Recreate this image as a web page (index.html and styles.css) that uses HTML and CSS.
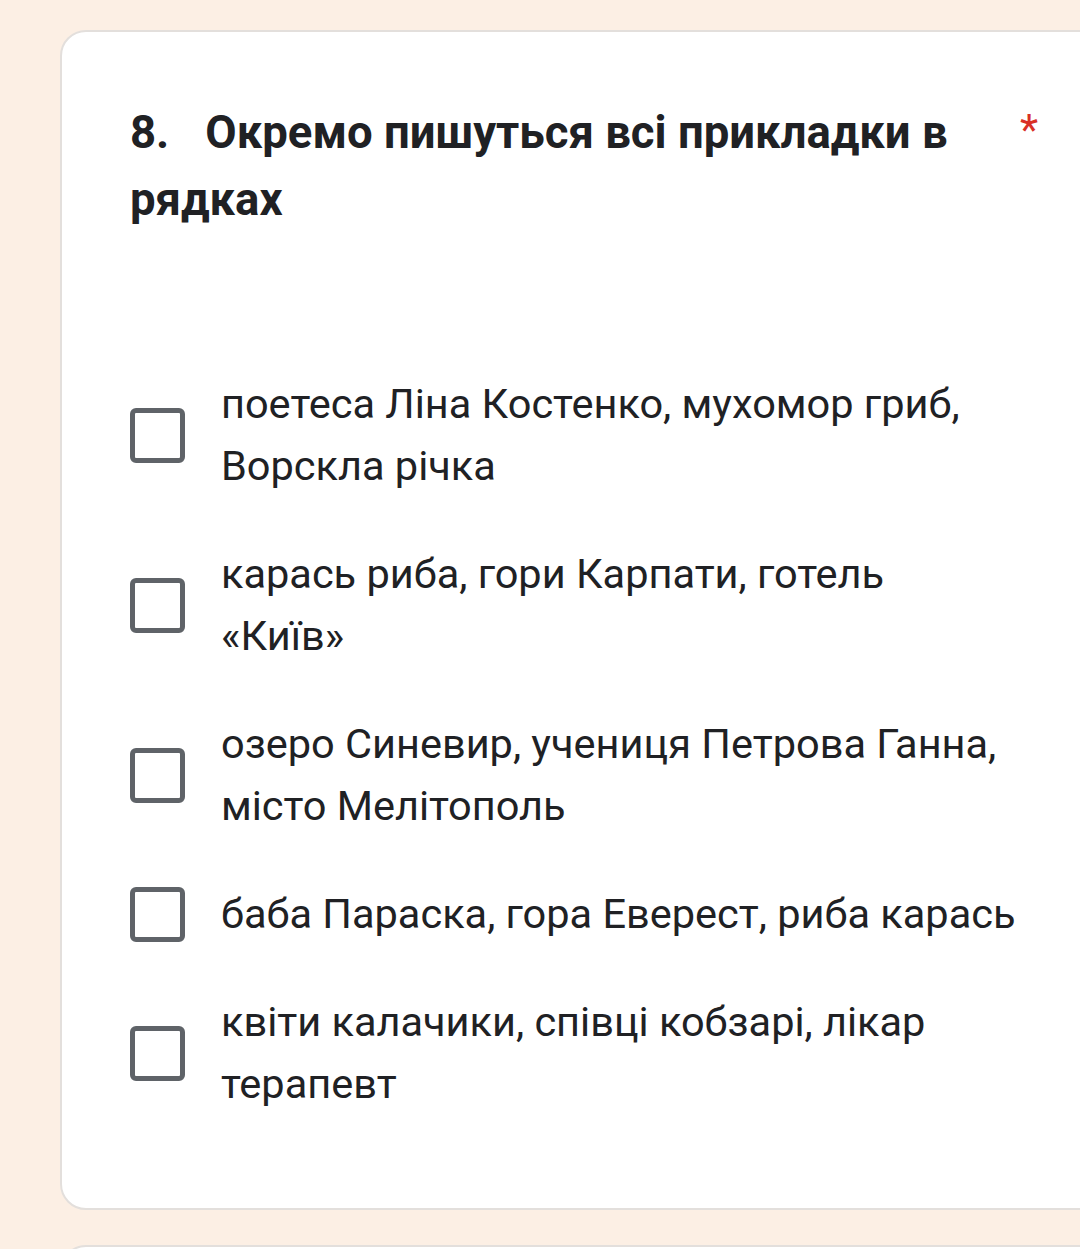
FILE: index.html
```html
<!DOCTYPE html>
<html lang="uk">
<head>
<meta charset="utf-8">
<link rel="stylesheet" href="styles.css">
</head>
<body>
<div class="page">
  <div class="card">
    <div class="title-row">
      <div class="title"><span class="num">8.</span>Окремо пишуться всі прикладки в рядках</div>
      <div class="req">*</div>
    </div>
    <div class="options">
      <div class="option"><span class="box"></span><span class="label">поетеса Ліна Костенко, мухомор гриб, Ворскла річка</span></div>
      <div class="option"><span class="box"></span><span class="label">карась риба, гори Карпати, готель «Київ»</span></div>
      <div class="option"><span class="box"></span><span class="label">озеро Синевир, учениця Петрова Ганна, місто Мелітополь</span></div>
      <div class="option"><span class="box"></span><span class="label">баба Параска, гора Еверест, риба карась</span></div>
      <div class="option"><span class="box"></span><span class="label">квіти калачики, співці кобзарі, лікар терапевт</span></div>
    </div>
  </div>
  <div class="card next"></div>
</div>
</body>
</html>
```

FILE: styles.css
```css
html, body {
  margin: 0;
  padding: 0;
  background: #fcefe4;
  overflow: hidden;
  height: 1249px;
}
.page {
  padding: 30px 0 0 60px;
  display: flex;
  flex-direction: column;
  gap: 35px;
}
.card {
  width: 1080px;
  background: #ffffff;
  border: 2px solid #e3dfdc;
  border-radius: 26px;
  padding: 67px 0 93px 68px;
  box-sizing: border-box;
  font-family: Roboto, "Noto Sans", sans-serif;
  color: #202124;
}
.card.next {
  height: 100px;
  padding: 0;
}
.title-row {
  display: flex;
  align-items: flex-start;
}
.title {
  flex: 0 0 870px;
  font-size: 45.5px;
  font-weight: 700;
  line-height: 67px;
}
.num {
  display: inline-block;
  margin-right: 36px;
}
.req {
  margin-left: 20px;
  color: #d93025;
  font-size: 42px;
  line-height: 67px;
  margin-top: -3px;
}
.options {
  margin-top: 140px;
  display: flex;
  flex-direction: column;
  gap: 46px;
}
.option {
  display: flex;
  align-items: center;
  gap: 36px;
}
.box {
  flex: 0 0 auto;
  width: 55px;
  height: 55px;
  box-sizing: border-box;
  border: 5px solid #5f6368;
  border-radius: 6px;
}
.label {
  width: 795px;
  font-size: 41.5px;
  line-height: 62px;
}
```
